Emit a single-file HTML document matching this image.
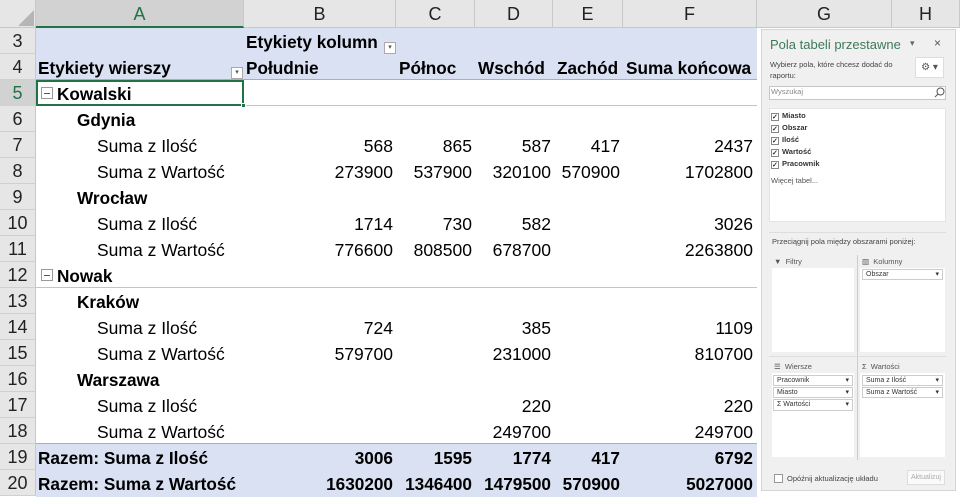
<!DOCTYPE html>
<html><head><meta charset="utf-8"><style>
*{margin:0;padding:0;box-sizing:border-box}
body{width:960px;height:497px;overflow:hidden;background:#fff;font-family:"Liberation Sans",Arial,sans-serif;position:relative}
.a{position:absolute;white-space:nowrap}
.hdr{position:absolute;top:0;height:28px;background:#e6e6e6;border-right:1px solid #c8c8c8;border-bottom:1px solid #c8c8c8;font-size:18px;color:#222;text-align:center;line-height:28px}
.rn{position:absolute;left:0;width:36px;height:26px;background:#e6e6e6;border-bottom:1px solid #d0d0d0;border-right:1px solid #c8c8c8;font-size:18px;text-align:center;line-height:26px;color:#222}
.c{position:absolute;font-size:17.5px;line-height:26px;height:26px;color:#000;white-space:nowrap}
.r{text-align:right}
.b{font-weight:bold;font-size:17.2px}
.p{font-family:"Liberation Sans",Arial,sans-serif;color:#333}
</style></head><body>
<div class="hdr" style="left:0;width:36px;background:#e6e6e6"></div>
<svg class="a" style="left:18px;top:10px" width="16" height="16"><polygon points="16,0 16,16 0,16" fill="#b5b5b5"/></svg>
<div class="hdr" style="left:36px;width:208px;background:#d2d2d2;color:#217346;border-bottom:2px solid #217346">A</div>
<div class="hdr" style="left:244px;width:152px">B</div>
<div class="hdr" style="left:396px;width:79px">C</div>
<div class="hdr" style="left:475px;width:78px">D</div>
<div class="hdr" style="left:553px;width:70px">E</div>
<div class="hdr" style="left:623px;width:134px">F</div>
<div class="hdr" style="left:757px;width:135px">G</div>
<div class="hdr" style="left:892px;width:68px">H</div>

<div class="a" style="left:36px;top:28px;width:721px;height:52px;background:#d9e1f2;border-bottom:1px solid #9bb0d8"></div>
<div class="a" style="left:36px;top:443px;width:721px;height:54px;background:#d9e1f2;border-top:1px solid #9bb0d8"></div>
<div class="a" style="left:36px;top:105px;width:721px;height:1px;background:#b4c6e7"></div>
<div class="a" style="left:36px;top:287px;width:721px;height:1px;background:#b4c6e7"></div>
<div class="a" style="left:36px;top:80px;width:208px;height:26px;border:2px solid #217346"></div>
<div class="a" style="left:241px;top:103px;width:5px;height:5px;background:#217346;border:1px solid #fff"></div>

<div class="rn" style="top:28px">3</div>
<div class="rn" style="top:54px">4</div>
<div class="rn" style="top:80px;background:#d2d2d2;color:#217346">5</div>
<div class="rn" style="top:106px">6</div>
<div class="rn" style="top:132px">7</div>
<div class="rn" style="top:158px">8</div>
<div class="rn" style="top:184px">9</div>
<div class="rn" style="top:210px">10</div>
<div class="rn" style="top:236px">11</div>
<div class="rn" style="top:262px">12</div>
<div class="rn" style="top:288px">13</div>
<div class="rn" style="top:314px">14</div>
<div class="rn" style="top:340px">15</div>
<div class="rn" style="top:366px">16</div>
<div class="rn" style="top:392px">17</div>
<div class="rn" style="top:418px">18</div>
<div class="rn" style="top:444px">19</div>
<div class="rn" style="top:470px">20</div>

<div class="c b" style="left:246px;top:29px">Etykiety kolumn</div>
<div class="a" style="left:384px;top:42px;width:12px;height:12px;border:1px solid #aaa;background:#fff;font-size:7px;text-align:center;line-height:10px;color:#555">▾</div>
<div class="c b" style="left:38px;top:55px">Etykiety wierszy</div>
<div class="a" style="left:231px;top:67px;width:12px;height:12px;border:1px solid #aaa;background:#fff;font-size:7px;text-align:center;line-height:10px;color:#555">▾</div>
<div class="c b" style="left:246px;top:55px">Południe</div>
<div class="c b" style="left:399px;top:55px">Północ</div>
<div class="c b" style="left:478px;top:55px">Wschód</div>
<div class="c b" style="left:557px;top:55px">Zachód</div>
<div class="c b" style="left:626px;top:55px">Suma końcowa</div>

<div class="a" style="left:41px;top:87px;width:12px;height:12px;border:1px solid #999;background:#fff"><div style="position:absolute;left:2px;top:5px;width:6px;height:1px;background:#555"></div></div>
<div class="a" style="left:41px;top:269px;width:12px;height:12px;border:1px solid #999;background:#fff"><div style="position:absolute;left:2px;top:5px;width:6px;height:1px;background:#555"></div></div>

<div class="c b" style="left:57px;top:81px">Kowalski</div>
<div class="c b" style="left:77px;top:107px">Gdynia</div>
<div class="c" style="left:97px;top:133px">Suma z Ilość</div>
<div class="c" style="left:97px;top:159px">Suma z Wartość</div>
<div class="c b" style="left:77px;top:185px">Wrocław</div>
<div class="c" style="left:97px;top:211px">Suma z Ilość</div>
<div class="c" style="left:97px;top:237px">Suma z Wartość</div>
<div class="c b" style="left:57px;top:263px">Nowak</div>
<div class="c b" style="left:77px;top:289px">Kraków</div>
<div class="c" style="left:97px;top:315px">Suma z Ilość</div>
<div class="c" style="left:97px;top:341px">Suma z Wartość</div>
<div class="c b" style="left:77px;top:367px">Warszawa</div>
<div class="c" style="left:97px;top:393px">Suma z Ilość</div>
<div class="c" style="left:97px;top:419px">Suma z Wartość</div>
<div class="c b" style="left:38px;top:445px">Razem: Suma z Ilość</div>
<div class="c b" style="left:38px;top:471px">Razem: Suma z Wartość</div>

<div class="c r" style="right:567px;top:133px">568</div>
<div class="c r" style="right:488px;top:133px">865</div>
<div class="c r" style="right:409px;top:133px">587</div>
<div class="c r" style="right:340px;top:133px">417</div>
<div class="c r" style="right:207px;top:133px">2437</div>
<div class="c r" style="right:567px;top:159px">273900</div>
<div class="c r" style="right:488px;top:159px">537900</div>
<div class="c r" style="right:409px;top:159px">320100</div>
<div class="c r" style="right:340px;top:159px">570900</div>
<div class="c r" style="right:207px;top:159px">1702800</div>
<div class="c r" style="right:567px;top:211px">1714</div>
<div class="c r" style="right:488px;top:211px">730</div>
<div class="c r" style="right:409px;top:211px">582</div>
<div class="c r" style="right:207px;top:211px">3026</div>
<div class="c r" style="right:567px;top:237px">776600</div>
<div class="c r" style="right:488px;top:237px">808500</div>
<div class="c r" style="right:409px;top:237px">678700</div>
<div class="c r" style="right:207px;top:237px">2263800</div>
<div class="c r" style="right:567px;top:315px">724</div>
<div class="c r" style="right:409px;top:315px">385</div>
<div class="c r" style="right:207px;top:315px">1109</div>
<div class="c r" style="right:567px;top:341px">579700</div>
<div class="c r" style="right:409px;top:341px">231000</div>
<div class="c r" style="right:207px;top:341px">810700</div>
<div class="c r" style="right:409px;top:393px">220</div>
<div class="c r" style="right:207px;top:393px">220</div>
<div class="c r" style="right:409px;top:419px">249700</div>
<div class="c r" style="right:207px;top:419px">249700</div>
<div class="c r b" style="right:567px;top:445px">3006</div>
<div class="c r b" style="right:488px;top:445px">1595</div>
<div class="c r b" style="right:409px;top:445px">1774</div>
<div class="c r b" style="right:340px;top:445px">417</div>
<div class="c r b" style="right:207px;top:445px">6792</div>
<div class="c r b" style="right:567px;top:471px">1630200</div>
<div class="c r b" style="right:488px;top:471px">1346400</div>
<div class="c r b" style="right:409px;top:471px">1479500</div>
<div class="c r b" style="right:340px;top:471px">570900</div>
<div class="c r b" style="right:207px;top:471px">5027000</div>

<div class="a" style="left:761px;top:29px;width:195px;height:462px;background:#f0f0f0;border:1px solid #d4d4d4"></div>
<div class="a p" style="left:770px;top:37px;font-size:13px;color:#3d7a5a">Pola tabeli przestawne</div>
<div class="a p" style="left:910px;top:38px;font-size:9px;color:#666">▾</div>
<div class="a p" style="left:934px;top:36px;font-size:12px;color:#555">×</div>
<div class="a p" style="left:770px;top:59px;font-size:7.5px;line-height:11px;color:#444">Wybierz pola, które chcesz dodać do<br>raportu:</div>
<div class="a" style="left:915px;top:57px;width:29px;height:21px;background:#fff;border:1px solid #ddd;font-size:10px;color:#555;text-align:center;line-height:19px">⚙ ▾</div>
<div class="a" style="left:769px;top:86px;width:177px;height:14px;background:#fff;border:1px solid #c6c6c6"></div>
<div class="a p" style="left:771px;top:87px;font-size:7.5px;color:#888">Wyszukaj</div>
<svg class="a" style="left:934px;top:87px" width="11" height="11"><circle cx="6.5" cy="4.5" r="3.5" fill="none" stroke="#555" stroke-width="1"/><line x1="4" y1="7" x2="1" y2="10" stroke="#555"/></svg>
<div class="a" style="left:769px;top:108px;width:177px;height:114px;background:#fff;border:1px solid #e4e4e4"></div>
<div class="a p" style="left:771px;top:110px;font-size:7.5px;line-height:12px;font-weight:bold;color:#333">
<div><span style="display:inline-block;width:8px;height:8px;border:1px solid #888;font-size:7px;line-height:7px;vertical-align:-1px;margin-right:3px">✓</span>Miasto</div>
<div><span style="display:inline-block;width:8px;height:8px;border:1px solid #888;font-size:7px;line-height:7px;vertical-align:-1px;margin-right:3px">✓</span>Obszar</div>
<div><span style="display:inline-block;width:8px;height:8px;border:1px solid #888;font-size:7px;line-height:7px;vertical-align:-1px;margin-right:3px">✓</span>Ilość</div>
<div><span style="display:inline-block;width:8px;height:8px;border:1px solid #888;font-size:7px;line-height:7px;vertical-align:-1px;margin-right:3px">✓</span>Wartość</div>
<div><span style="display:inline-block;width:8px;height:8px;border:1px solid #888;font-size:7px;line-height:7px;vertical-align:-1px;margin-right:3px">✓</span>Pracownik</div>
</div>
<div class="a p" style="left:771px;top:176px;font-size:7.5px;color:#555">Więcej tabel...</div>
<div class="a" style="left:769px;top:232px;width:177px;height:1px;background:#ddd"></div>
<div class="a p" style="left:772px;top:237px;font-size:7.5px;color:#444">Przeciągnij pola między obszarami poniżej:</div>
<div class="a" style="left:857px;top:255px;width:1px;height:205px;background:#ccc"></div>
<div class="a" style="left:769px;top:356px;width:177px;height:1px;background:#ddd"></div>
<div class="a p" style="left:774px;top:257px;font-size:7.5px;color:#555">▼&nbsp; Filtry</div>
<div class="a p" style="left:862px;top:257px;font-size:7.5px;color:#555">▥&nbsp; Kolumny</div>
<div class="a p" style="left:774px;top:362px;font-size:7.5px;color:#555">☰&nbsp; Wiersze</div>
<div class="a p" style="left:862px;top:362px;font-size:7.5px;color:#555">Σ&nbsp; Wartości</div>
<div class="a" style="left:772px;top:268px;width:82px;height:84px;background:#fff"></div>
<div class="a" style="left:860px;top:268px;width:85px;height:84px;background:#fff"></div>
<div class="a" style="left:772px;top:373px;width:82px;height:84px;background:#fff"></div>
<div class="a" style="left:860px;top:373px;width:85px;height:84px;background:#fff"></div>
<div class="a p" style="left:862px;top:269px;width:81px;height:11px;border:1px solid #ccc;font-size:7px;line-height:9px;padding-left:3px">Obszar<span style="float:right;margin-right:3px">▾</span></div>
<div class="a p" style="left:773px;top:375px;width:80px;height:11px;border:1px solid #ccc;font-size:7px;line-height:9px;padding-left:3px">Pracownik<span style="float:right;margin-right:3px">▾</span></div>
<div class="a p" style="left:773px;top:387px;width:80px;height:11px;border:1px solid #ccc;font-size:7px;line-height:9px;padding-left:3px">Miasto<span style="float:right;margin-right:3px">▾</span></div>
<div class="a p" style="left:773px;top:399px;width:80px;height:12px;border:1px solid #ccc;font-size:7px;line-height:10px;padding-left:3px">Σ Wartości<span style="float:right;margin-right:3px">▾</span></div>
<div class="a p" style="left:862px;top:375px;width:81px;height:11px;border:1px solid #ccc;font-size:7px;line-height:9px;padding-left:3px">Suma z Ilość<span style="float:right;margin-right:3px">▾</span></div>
<div class="a p" style="left:862px;top:387px;width:81px;height:11px;border:1px solid #ccc;font-size:7px;line-height:9px;padding-left:3px">Suma z Wartość<span style="float:right;margin-right:3px">▾</span></div>
<div class="a" style="left:774px;top:474px;width:9px;height:9px;border:1px solid #999;background:#fff"></div>
<div class="a p" style="left:787px;top:474px;font-size:7.5px;color:#444">Opóźnij aktualizację układu</div>
<div class="a p" style="left:907px;top:470px;width:38px;height:15px;border:1px solid #ddd;background:#fafafa;font-size:7px;line-height:13px;text-align:center;color:#aaa">Aktualizuj</div>
</body></html>
